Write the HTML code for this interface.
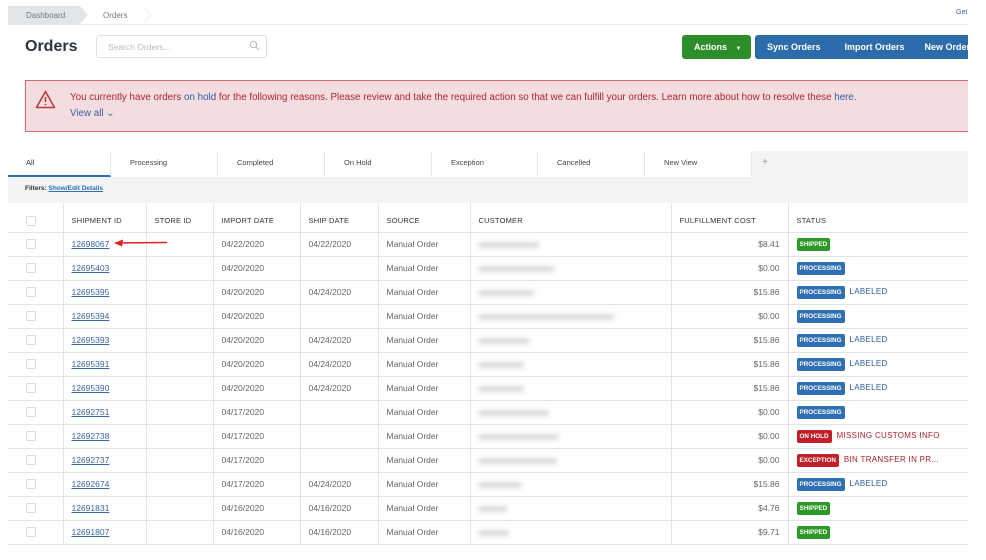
<!DOCTYPE html>
<html><head><meta charset="utf-8"><style>
*{box-sizing:border-box;margin:0;padding:0}
body{width:986px;height:560px;overflow:hidden;background:#fff;font-family:"Liberation Sans",Arial,sans-serif;position:relative;color:#333}
.abs{position:absolute}
.tab{position:absolute;top:151px;height:26px;font-size:7.5px;color:#444;line-height:24px;background:#fff;border-right:1px solid #e6e7ea}
table{position:absolute;left:8px;top:203px;border-collapse:collapse;font-size:8.5px;color:#666;width:960px}
td,th{border-right:1px solid #e2e4ea;border-bottom:1px solid #e2e4ea;height:24px;padding:0 8px;white-space:nowrap;text-align:left}
tr{height:24px}
th{font-weight:normal;color:#333;font-size:7.5px;height:29px;letter-spacing:.2px;padding-top:7px}
td:last-child,th:last-child{border-right:none}
.cb{width:10px;height:10px;border:1px solid #ddd;border-radius:2px;display:inline-block;margin-left:10px;vertical-align:middle}
a{color:#3a64a8;text-decoration:underline}
.bl{display:inline-block;height:6px;background:#ccc;filter:blur(2.5px);opacity:.7;vertical-align:middle}
.bd{display:inline-block;color:#fff;font-size:6.3px;font-weight:bold;padding:3px 3px;border-radius:2px;vertical-align:middle;line-height:7px}
.sh{background:#2b9a28}.pr{background:#2f6fb5}.rd{background:#c1202a}
.lb{color:#2f5ca0;font-size:8px;margin-left:5px;letter-spacing:.3px}
.rl{color:#a8232a;font-size:8px;margin-left:5px;letter-spacing:.3px}
.r{text-align:right}
</style></head><body>
<div class="abs" style="left:8px;top:6px;width:960px;height:19px;border-bottom:1px solid #e8eaee"></div>
<div class="abs" style="left:8px;top:6px;width:72px;height:19px;background:#e2e5ea"></div>
<div class="abs" style="left:80px;top:6px;width:0;height:0;border-top:9.5px solid transparent;border-bottom:9.5px solid transparent;border-left:8px solid #e2e5ea"></div>
<div class="abs" style="left:143px;top:6px;width:0;height:0;border-top:9.5px solid transparent;border-bottom:9.5px solid transparent;border-left:8px solid #e8eaee"></div>
<div class="abs" style="left:142px;top:6px;width:0;height:0;border-top:9.5px solid transparent;border-bottom:9.5px solid transparent;border-left:8px solid #fff"></div>
<div class="abs" style="left:26px;top:6px;font-size:8px;color:#777;line-height:19px">Dashboard</div>
<div class="abs" style="left:103px;top:6px;font-size:8px;color:#777;line-height:19px">Orders</div>
<div class="abs" style="left:956px;top:9px;font-size:7px;color:#3a64a8">Get</div>
<div class="abs" style="left:25px;top:38px;font-size:16px;font-weight:bold;color:#2c3440">Orders</div>
<div class="abs" style="left:96px;top:35px;width:171px;height:23px;border:1px solid #dfe2e6;border-radius:3px;font-size:8.5px;color:#bbb;padding:6px 11px">Search Orders...</div>
<svg class="abs" style="left:249px;top:40px" width="11" height="11" viewBox="0 0 11 11"><circle cx="4.5" cy="4.5" r="3.2" fill="none" stroke="#bbb" stroke-width="1"/><path d="M7 7l3 3" stroke="#bbb" stroke-width="1.2"/></svg>
<div class="abs" style="left:682px;top:35px;width:69px;height:24px;background:#2c8d2a;border-radius:3px;color:#fff;font-size:9px;font-weight:bold;line-height:24px;padding-left:12px">Actions <span style="font-size:6px;margin-left:6px">▼</span></div>
<div class="abs" style="left:755px;top:35px;width:220px;height:24px;background:#2d6cab;border-radius:3px;color:#fff;font-size:9px;font-weight:bold;line-height:24px;white-space:nowrap"><span style="margin-left:12px">Sync Orders</span><span style="margin-left:24px">Import Orders</span><span style="margin-left:20px">New Orders</span></div>
<div class="abs" style="left:968px;top:0;width:18px;height:560px;background:#fff"></div>
<div class="abs" style="left:25px;top:80px;width:943px;height:52px;background:#f3dde0;border:1px solid #d46b6e;border-right:none"></div>
<svg class="abs" style="left:35px;top:90px" width="21" height="19" viewBox="0 0 21 19"><path d="M10.5 1.5L19.5 17.5H1.5Z" fill="none" stroke="#b93a3a" stroke-width="1.6" stroke-linejoin="round"/><path d="M10.5 7v5" stroke="#b93a3a" stroke-width="1.6"/><circle cx="10.5" cy="14.5" r=".9" fill="#b93a3a"/></svg>
<div class="abs" style="left:70px;top:92px;font-size:9.8px;color:#b0262e;white-space:nowrap">You currently have orders <span style="color:#2f5ca0">on hold</span> for the following reasons. Please review and take the required action so that we can fulfill your orders. Learn more about how to resolve these <span style="color:#2f5ca0">here</span>.</div>
<div class="abs" style="left:70px;top:108px;font-size:9.8px;color:#3a64a8">View all ⌄</div>
<div class="abs" style="left:8px;top:151px;width:960px;height:52px;background:#f2f3f5"></div>
<div class="tab" style="left:8px;width:103px;padding-left:18px;border-bottom:2px solid #2f6fb5;color:#333">All</div>
<div class="tab" style="left:111px;width:107px;padding-left:19px">Processing</div>
<div class="tab" style="left:218px;width:107px;padding-left:19px">Completed</div>
<div class="tab" style="left:325px;width:107px;padding-left:19px">On Hold</div>
<div class="tab" style="left:432px;width:106px;padding-left:19px">Exception</div>
<div class="tab" style="left:538px;width:107px;padding-left:19px">Cancelled</div>
<div class="tab" style="left:645px;width:107px;padding-left:19px">New View</div>
<div class="abs" style="left:762px;top:157px;font-size:10px;color:#999">+</div>
<div class="abs" style="left:25px;top:185px;font-size:6.5px;color:#333;font-weight:bold">Filters: <span style="color:#2f6fb5;text-decoration:underline">Show/Edit Details</span></div>
<table>
<tr style="background:#fff;height:29px"><th style="width:55px"><span class="cb"></span></th><th style="width:83px">SHIPMENT ID</th><th style="width:67px">STORE ID</th><th style="width:87px">IMPORT DATE</th><th style="width:78px">SHIP DATE</th><th style="width:92px">SOURCE</th><th style="width:201px">CUSTOMER</th><th style="width:117px">FULFILLMENT COST</th><th>STATUS</th></tr>
<tr><td><span class="cb"></span></td><td><a>12698067</a></td><td></td><td>04/22/2020</td><td>04/22/2020</td><td>Manual Order</td><td><span class="bl" style="width:60px"></span></td><td class="r">$8.41</td><td><span class="bd sh">SHIPPED</span></td></tr>
<tr><td><span class="cb"></span></td><td><a>12695403</a></td><td></td><td>04/20/2020</td><td></td><td>Manual Order</td><td><span class="bl" style="width:75px"></span></td><td class="r">$0.00</td><td><span class="bd pr">PROCESSING</span></td></tr>
<tr><td><span class="cb"></span></td><td><a>12695395</a></td><td></td><td>04/20/2020</td><td>04/24/2020</td><td>Manual Order</td><td><span class="bl" style="width:55px"></span></td><td class="r">$15.86</td><td><span class="bd pr">PROCESSING</span><span class="lb">LABELED</span></td></tr>
<tr><td><span class="cb"></span></td><td><a>12695394</a></td><td></td><td>04/20/2020</td><td></td><td>Manual Order</td><td><span class="bl" style="width:135px"></span></td><td class="r">$0.00</td><td><span class="bd pr">PROCESSING</span></td></tr>
<tr><td><span class="cb"></span></td><td><a>12695393</a></td><td></td><td>04/20/2020</td><td>04/24/2020</td><td>Manual Order</td><td><span class="bl" style="width:50px"></span></td><td class="r">$15.86</td><td><span class="bd pr">PROCESSING</span><span class="lb">LABELED</span></td></tr>
<tr><td><span class="cb"></span></td><td><a>12695391</a></td><td></td><td>04/20/2020</td><td>04/24/2020</td><td>Manual Order</td><td><span class="bl" style="width:45px"></span></td><td class="r">$15.86</td><td><span class="bd pr">PROCESSING</span><span class="lb">LABELED</span></td></tr>
<tr><td><span class="cb"></span></td><td><a>12695390</a></td><td></td><td>04/20/2020</td><td>04/24/2020</td><td>Manual Order</td><td><span class="bl" style="width:45px"></span></td><td class="r">$15.86</td><td><span class="bd pr">PROCESSING</span><span class="lb">LABELED</span></td></tr>
<tr><td><span class="cb"></span></td><td><a>12692751</a></td><td></td><td>04/17/2020</td><td></td><td>Manual Order</td><td><span class="bl" style="width:70px"></span></td><td class="r">$0.00</td><td><span class="bd pr">PROCESSING</span></td></tr>
<tr><td><span class="cb"></span></td><td><a>12692738</a></td><td></td><td>04/17/2020</td><td></td><td>Manual Order</td><td><span class="bl" style="width:80px"></span></td><td class="r">$0.00</td><td><span class="bd rd">ON HOLD</span><span class="rl">MISSING CUSTOMS INFO</span></td></tr>
<tr><td><span class="cb"></span></td><td><a>12692737</a></td><td></td><td>04/17/2020</td><td></td><td>Manual Order</td><td><span class="bl" style="width:78px"></span></td><td class="r">$0.00</td><td><span class="bd rd">EXCEPTION</span><span class="rl">BIN TRANSFER IN PR...</span></td></tr>
<tr><td><span class="cb"></span></td><td><a>12692674</a></td><td></td><td>04/17/2020</td><td>04/24/2020</td><td>Manual Order</td><td><span class="bl" style="width:42px"></span></td><td class="r">$15.86</td><td><span class="bd pr">PROCESSING</span><span class="lb">LABELED</span></td></tr>
<tr><td><span class="cb"></span></td><td><a>12691831</a></td><td></td><td>04/16/2020</td><td>04/16/2020</td><td>Manual Order</td><td><span class="bl" style="width:28px"></span></td><td class="r">$4.76</td><td><span class="bd sh">SHIPPED</span></td></tr>
<tr><td><span class="cb"></span></td><td><a>12691807</a></td><td></td><td>04/16/2020</td><td>04/16/2020</td><td>Manual Order</td><td><span class="bl" style="width:30px"></span></td><td class="r">$9.71</td><td><span class="bd sh">SHIPPED</span></td></tr>
</table>
<svg class="abs" style="left:114px;top:239px" width="54" height="8" viewBox="0 0 54 8"><path d="M6 4L53 3.5" stroke="#e02020" stroke-width="1.5"/><path d="M0 4L9 0.5L8 7.5Z" fill="#e02020"/></svg>
</body></html>
